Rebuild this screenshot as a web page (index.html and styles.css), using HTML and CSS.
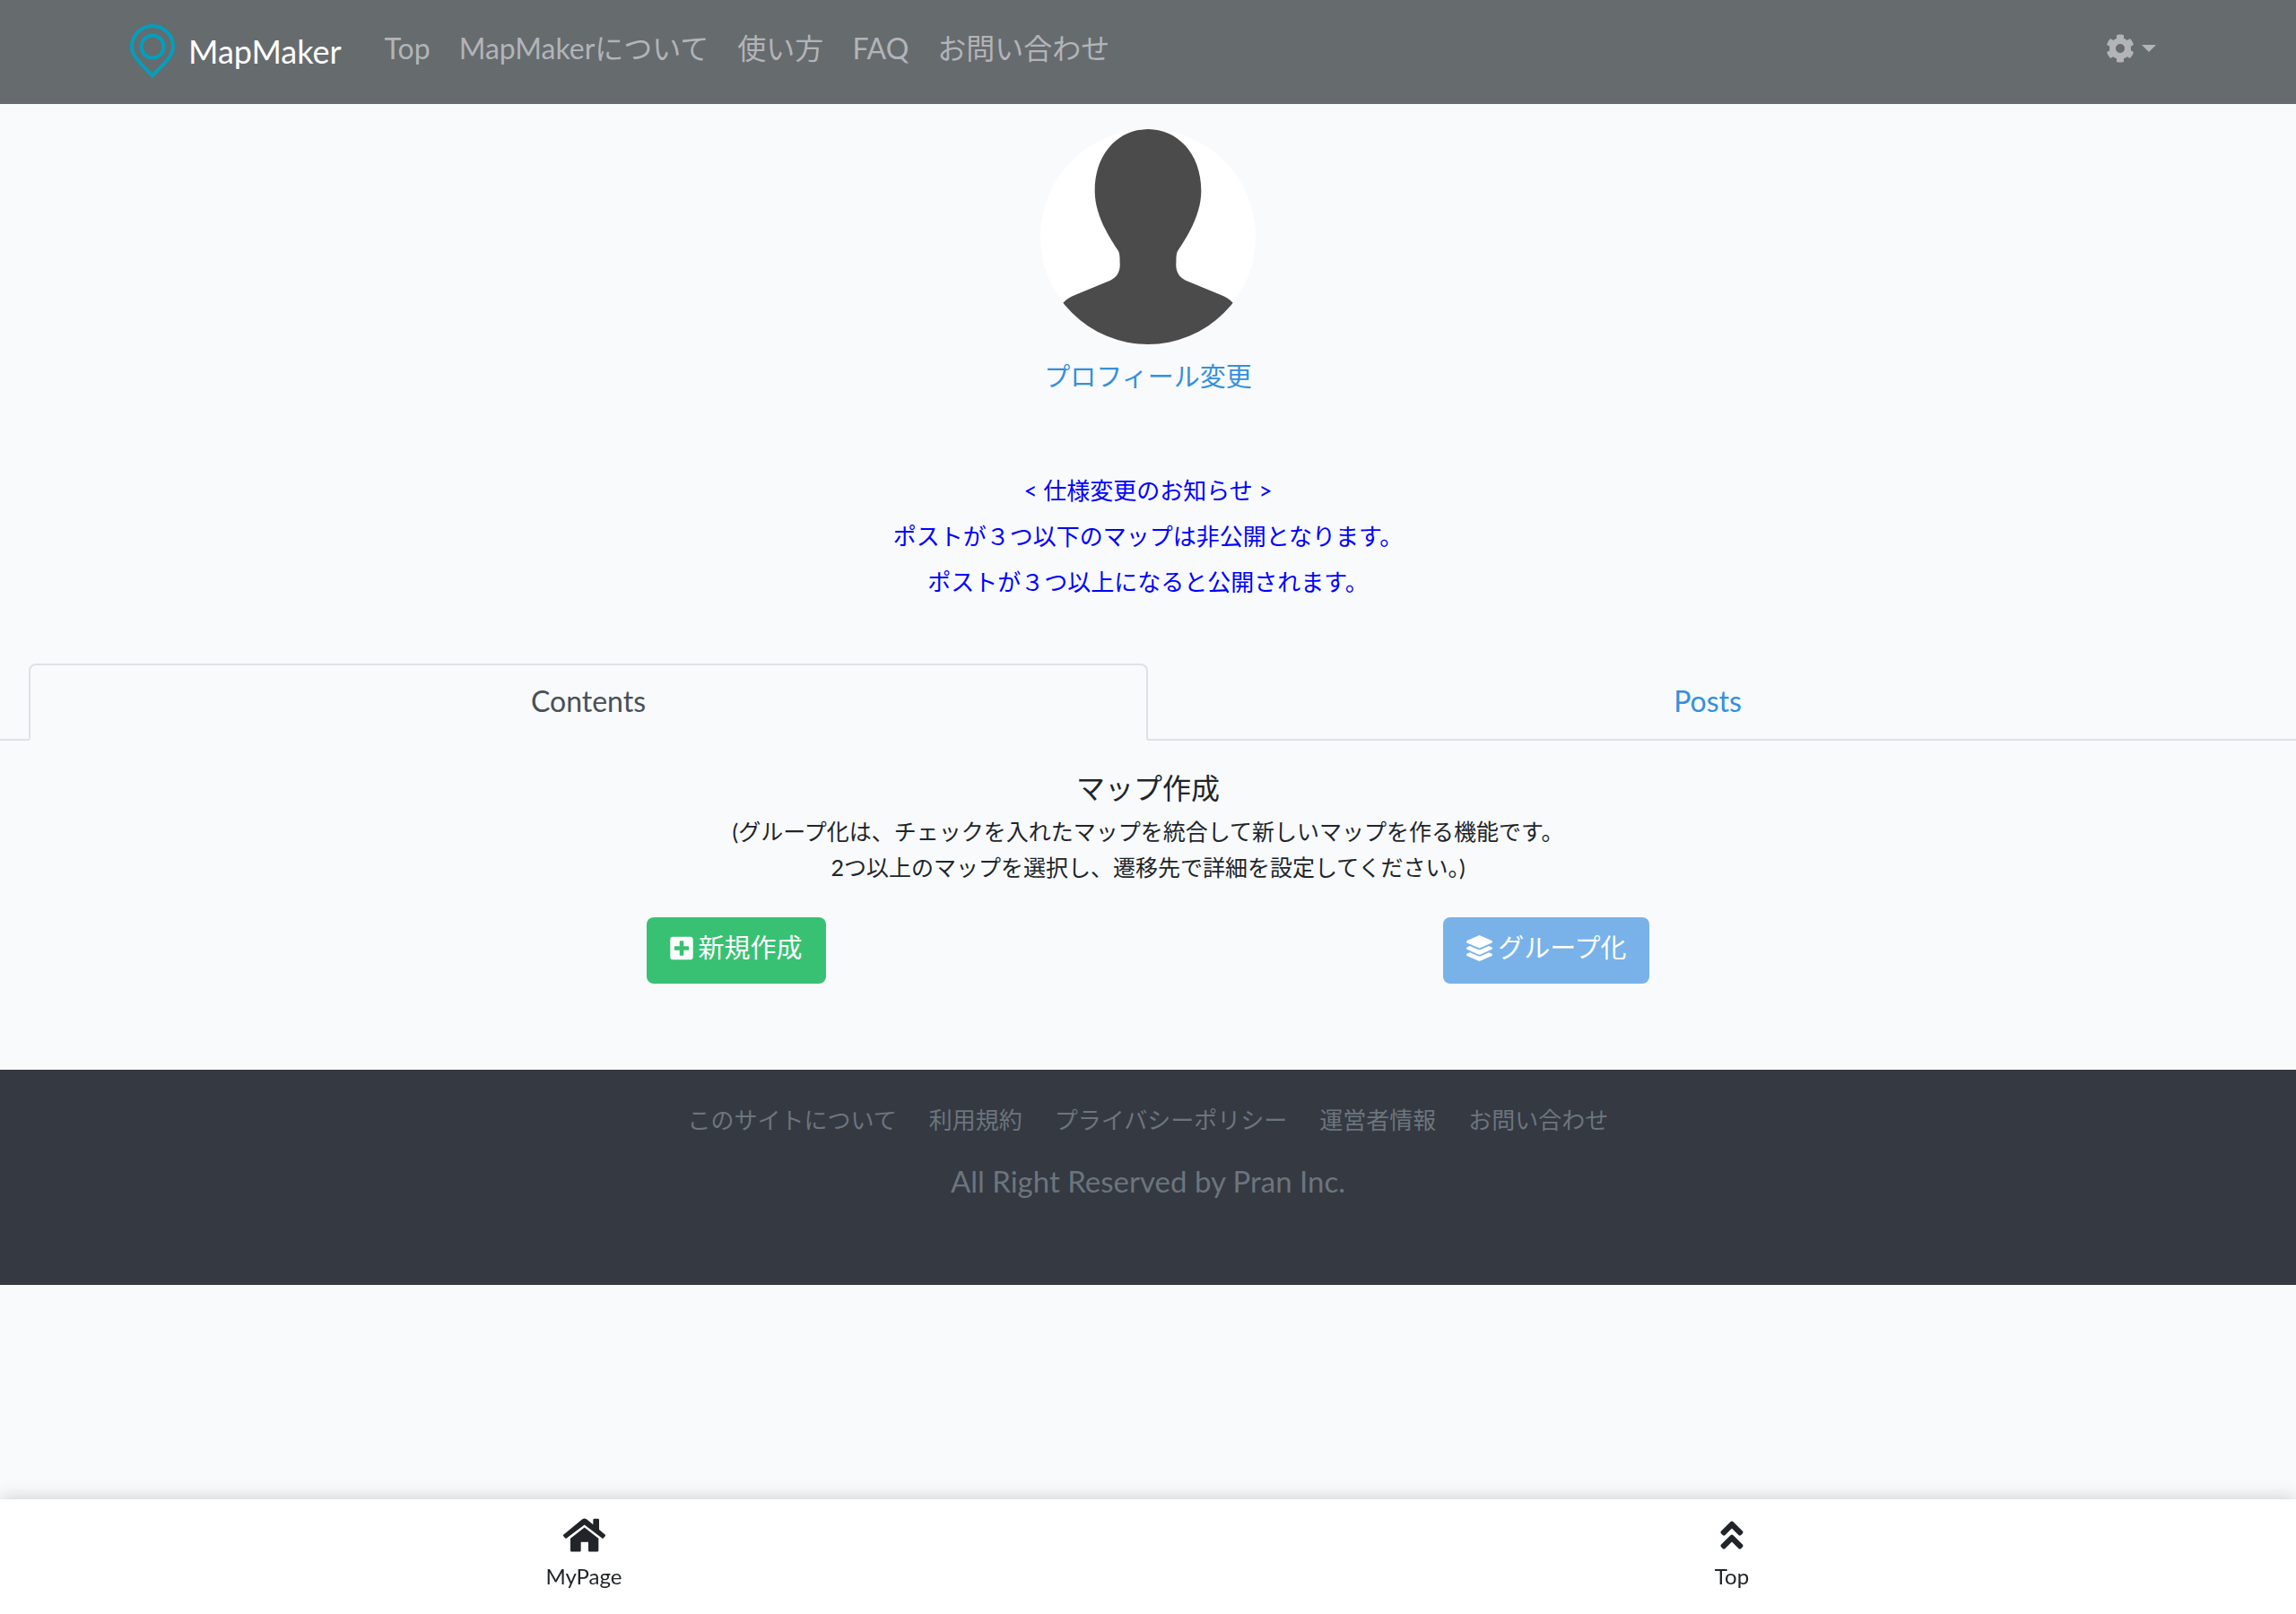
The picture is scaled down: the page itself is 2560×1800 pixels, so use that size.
FILE: index.html
```html
<!DOCTYPE html>
<html lang="ja">
<head>
  <meta charset="UTF-8">
  <meta name="viewport" content="width=device-width, initial-scale=1.0">
  <title>MapMaker</title>
  <link rel="stylesheet" href="styles.css">
</head>
<body>
  <header class="navbar">
    <div class="container">
      <a class="brand" href="#">
        <svg class="brand-logo" viewBox="0 0 60 60" aria-hidden="true">
          <path d="M30 57.500C24 50 7 38 7 25a23 23 0 0 1 46 0c0 13-17 25-23 32.500z" />
          <circle cx="30" cy="25" r="12.500" />
        </svg>
        <span>MapMaker</span>
      </a>
      <nav class="nav-links">
        <a href="#">Top</a>
        <a href="#">MapMakerについて</a>
        <a href="#">使い方</a>
        <a href="#">FAQ</a>
        <a href="#">お問い合わせ</a>
      </nav>
      <button class="settings" type="button" aria-label="設定">
        <svg class="icon" viewBox="0 0 512 512" aria-hidden="true"><path d="M487.4 315.7l-42.6-24.6c4.3-23.2 4.3-47 0-70.2l42.6-24.6c4.9-2.8 7.1-8.6 5.5-14-11.1-35.6-30-67.8-54.7-94.6-3.8-4.1-10-5.1-14.8-2.3L380.8 110c-17.9-15.4-38.5-27.3-60.8-35.1V25.8c0-5.6-3.9-10.5-9.4-11.7-36.7-8.2-74.3-7.8-109.2 0-5.5 1.2-9.4 6.1-9.4 11.7V75c-22.2 7.9-42.8 19.8-60.8 35.1L88.7 85.5c-4.9-2.8-11-1.9-14.8 2.3-24.7 26.7-43.6 58.9-54.7 94.6-1.7 5.4.6 11.2 5.5 14L67.3 221c-4.3 23.2-4.3 47 0 70.2l-42.6 24.6c-4.9 2.8-7.1 8.6-5.5 14 11.1 35.6 30 67.8 54.7 94.6 3.8 4.1 10 5.1 14.8 2.3l42.6-24.6c17.9 15.4 38.5 27.3 60.8 35.1v49.2c0 5.6 3.9 10.5 9.4 11.7 36.7 8.2 74.3 7.8 109.2 0 5.5-1.2 9.4-6.1 9.4-11.7v-49.2c22.2-7.9 42.8-19.8 60.8-35.1l42.6 24.6c4.9 2.8 11 1.9 14.8-2.3 24.7-26.7 43.6-58.9 54.7-94.6 1.5-5.5-.7-11.3-5.6-14.1zM256 336c-44.1 0-80-35.9-80-80s35.9-80 80-80 80 35.9 80 80-35.9 80-80 80z"/></svg>
        <span class="caret"></span>
      </button>
    </div>
  </header>

  <main>
    <section class="profile">
      <svg class="avatar" viewBox="60 72 720 720" role="img" aria-label="プロフィール画像">
        <path d="M420 72C515 72 598 150 598 278C598 350 560 420 519 480Q514 488 514 520C512 548 524 568 546 578L666 628Q690 638 704 653L780 792H60L136 653Q150 638 174 628L294 578C316 568 328 548 326 520Q326 488 321 480C280 420 242 350 242 278C242 150 325 72 420 72Z" />
      </svg>
      <a href="#">プロフィール変更</a>
    </section>

    <section class="notice">
      <p>&lt; 仕様変更のお知らせ &gt;</p>
      <p>ポストが３つ以下のマップは非公開となります。</p>
      <p>ポストが３つ以上になると公開されます。</p>
    </section>

    <nav class="tabs">
      <a class="active" href="#contents">Contents</a>
      <a href="#posts">Posts</a>
    </nav>

    <section class="contents" id="contents">
      <h1>マップ作成</h1>
      <p>(グループ化は、チェックを入れたマップを統合して新しいマップを作る機能です。<br>2つ以上のマップを選択し、遷移先で詳細を設定してください。)</p>
      <div class="actions">
        <button class="btn btn-success" type="button">
          <svg class="icon-square" viewBox="0 0 448 512" aria-hidden="true"><path d="M400 32H48C21.5 32 0 53.5 0 80v352c0 26.5 21.5 48 48 48h352c26.5 0 48-21.5 48-48V80c0-26.5-21.5-48-48-48zm-32 252c0 6.600-5.400 12-12 12h-92v92c0 6.600-5.400 12-12 12h-56c-6.600 0-12-5.400-12-12v-92H92c-6.600 0-12-5.400-12-12v-56c0-6.600 5.400-12 12-12h92v-92c0-6.600 5.400-12 12-12h56c6.600 0 12 5.400 12 12v92h92c6.600 0 12 5.400 12 12v56z"/></svg>
          新規作成
        </button>
        <button class="btn btn-primary" type="button" disabled>
          <svg class="icon-layers" viewBox="0 0 512 512" aria-hidden="true"><path d="M12.410 148.020l232.940 105.670c6.800 3.090 14.490 3.090 21.290 0l232.940-105.670c16.550-7.510 16.550-32.520 0-40.030L266.650 2.310a25.607 25.607 0 0 0-21.290 0L12.410 107.980c-16.550 7.510-16.550 32.530 0 40.040zm487.180 88.280l-58.090-26.330-161.640 73.270c-7.560 3.430-15.590 5.170-23.860 5.170s-16.290-1.740-23.860-5.170L70.510 209.970l-58.100 26.330c-16.550 7.500-16.550 32.500 0 40l232.940 105.590c6.800 3.080 14.490 3.080 21.290 0L499.590 276.300c16.550-7.500 16.550-32.500 0-40zm0 127.800l-57.870-26.230-161.860 73.370c-7.560 3.430-15.590 5.170-23.860 5.170s-16.290-1.740-23.860-5.170L70.290 337.870 12.410 364.100c-16.550 7.500-16.550 32.500 0 40l232.940 105.590c6.800 3.080 14.490 3.080 21.290 0L499.590 404.100c16.550-7.500 16.550-32.500 0-40z"/></svg>
          グループ化
        </button>
      </div>
    </section>
  </main>

  <footer class="footer">
    <nav class="footer-links">
      <a href="#">このサイトについて</a>
      <a href="#">利用規約</a>
      <a href="#">プライバシーポリシー</a>
      <a href="#">運営者情報</a>
      <a href="#">お問い合わせ</a>
    </nav>
    <p>All Right Reserved by Pran Inc.</p>
  </footer>

  <nav class="bottom-nav">
    <a href="#">
      <svg class="icon-home" viewBox="0 0 141 111" aria-hidden="true">
        <path d="M71 0q4 0 8 3l21 17V5q0-4 4-4h12q4 0 4 4v32l19 16q4 3 1 6l-5 6q-3 3-6 0L71 21 12 65q-3 3-6 0l-5-6q-3-3 1-6L63 3q4-3 8-3z" />
        <path d="M71 30l47 37v40q0 4-4 4H88q-4 0-4-4V79H59v28q0 4-4 4H28q-4 0-4-4V67z" />
      </svg>
      <span>MyPage</span>
    </a>
    <a href="#">
      <svg class="icon-up" viewBox="0 0 320 512" aria-hidden="true"><path d="M177 255.700l136 136c9.400 9.400 9.400 24.600 0 33.900l-22.600 22.600c-9.400 9.400-24.600 9.400-33.900 0L160 351.900l-96.400 96.400c-9.400 9.400-24.600 9.400-33.900 0L7 425.700c-9.400-9.400-9.400-24.600 0-33.900l136-136c9.400-9.500 24.600-9.500 34-.1zm-34-192L7 199.700c-9.400 9.400-9.400 24.600 0 33.900l22.600 22.600c9.400 9.400 24.600 9.400 33.900 0l96.400-96.400 96.400 96.400c9.400 9.400 24.600 9.400 33.900 0l22.600-22.600c9.400-9.400 9.400-24.600 0-33.900l-136-136c-9.200-9.400-24.400-9.400-33.800 0z"/></svg>
      <span>Top</span>
    </a>
  </nav>
</body>
</html>
```
FILE: styles.css
```css
* {
  box-sizing: border-box;
}

body {
  margin: 0;
  padding-bottom: 128px;
  background-color: #f8fafc;
  color: #212529;
  font-family: Lato, "Noto Sans CJK JP", sans-serif;
  font-size: 32px;
  line-height: 52px;
}

a {
  color: #3490dc;
  text-decoration: none;
}

p {
  margin: 0;
}

svg {
  fill: currentColor;
}

.navbar {
  background-color: #666b6e;
}

.container {
  display: flex;
  align-items: center;
  max-width: 2280px;
  height: 116px;
  margin: 0 auto;
}

.brand {
  display: flex;
  align-items: center;
  gap: 10px;
  margin-right: 32px;
  margin-bottom: 2px;
  color: #fff;
  font-size: 36px;
}

.brand-logo {
  width: 60px;
  height: 60px;
  fill: none;
  stroke: #00a0bd;
  stroke-width: 4;
}

.nav-links {
  display: flex;
  flex: 1;
  margin-bottom: 8px;
}

.nav-links a {
  padding: 0 16px;
  color: #b2b4b8;
}

.settings {
  display: flex;
  align-items: center;
  gap: 8px;
  margin-bottom: 8px;
  padding: 0 16px;
  border: none;
  background: none;
  color: #b2b4b8;
  cursor: pointer;
}

.icon {
  width: 32px;
  height: 32px;
}

.caret {
  border-top: 8px solid;
  border-right: 8px solid transparent;
  border-left: 8px solid transparent;
}

.profile {
  display: flex;
  flex-direction: column;
  align-items: center;
  gap: 10px;
  padding-top: 28px;
  font-size: 29px;
}

.avatar {
  width: 240px;
  height: 240px;
  border-radius: 50%;
  background-color: #fff;
  fill: #4b4b4b;
}

.notice {
  padding: 76px 32px 65px;
  color: #00f;
  font-size: 26px;
  line-height: 51px;
  text-align: center;
}

.tabs {
  display: flex;
  padding: 0 32px;
  border-bottom: 2px solid #dee2e6;
}

.tabs a {
  flex: 1;
  margin-bottom: -2px;
  padding: 14px 16px 16px;
  border: 2px solid transparent;
  border-radius: 8px 8px 0 0;
  text-align: center;
}

.tabs .active {
  border-color: #dee2e6 #dee2e6 #f8fafc;
  background-color: #f8fafc;
  color: #495057;
}

.contents {
  padding: 27px 32px 96px;
  text-align: center;
}

.contents h1 {
  margin: 0 0 2px;
  font-size: 32px;
  font-weight: 400;
}

.contents p {
  font-size: 25px;
  line-height: 40px;
}

.actions {
  display: flex;
  justify-content: space-evenly;
  margin-top: 36px;
}

.btn {
  display: flex;
  align-items: center;
  gap: 6px;
  padding: 8px 24px 14px;
  border: 2px solid transparent;
  border-radius: 8px;
  color: #fff;
  font-family: inherit;
  font-size: 29px;
  line-height: 48px;
}

.btn-success {
  background-color: #38c172;
}

.btn-primary {
  background-color: #78b2e8;
}

.icon-square {
  width: 26px;
  height: 29px;
}

.icon-layers {
  width: 29px;
  height: 29px;
}

.footer {
  height: 240px;
  padding-top: 30px;
  background-color: #353942;
  color: #6c757d;
  font-size: 33px;
  text-align: center;
}

.footer-links {
  display: flex;
  justify-content: center;
  gap: 36px;
  margin-bottom: 16px;
  font-size: 26px;
}

.footer-links a {
  color: inherit;
}

.bottom-nav {
  position: fixed;
  right: 0;
  bottom: 0;
  left: 0;
  display: flex;
  height: 128px;
  background-color: #fff;
  box-shadow: 0 0 20px rgba(0, 0, 0, 0.2);
}

.bottom-nav a {
  display: flex;
  flex: 1;
  flex-direction: column;
  align-items: center;
  padding: 20px 0 0 22px;
  color: #212529;
  font-size: 24px;
}

.icon-home {
  width: 47px;
  height: 40px;
}

.icon-up {
  width: 26px;
  height: 40px;
}
```
